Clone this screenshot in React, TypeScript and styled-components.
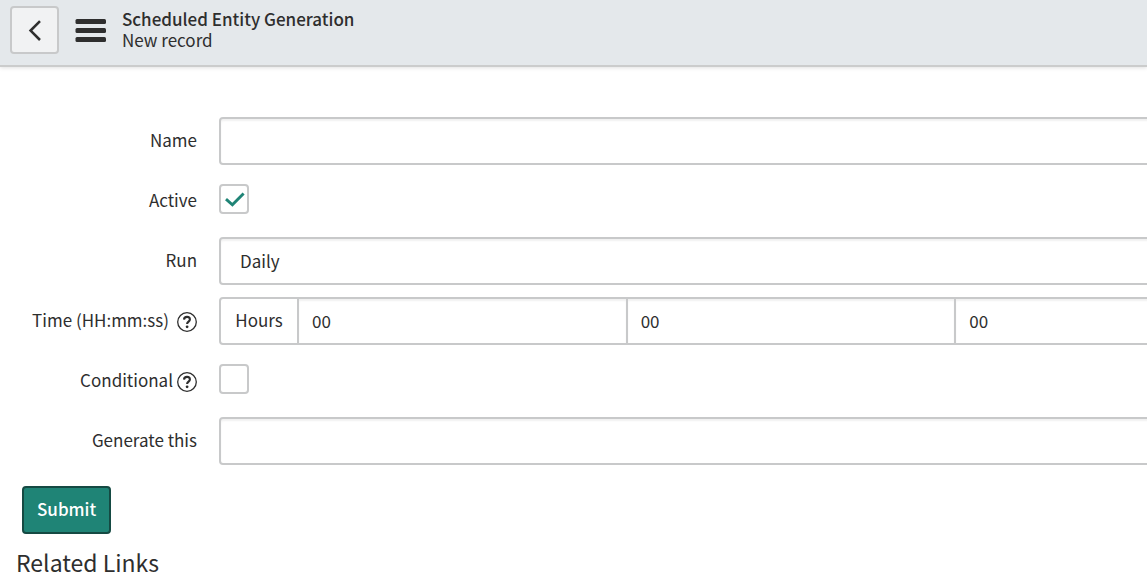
import React from "react";
import styled, { createGlobalStyle } from "styled-components";

const GlobalStyle = createGlobalStyle`
  *, *::before, *::after { box-sizing: border-box; }
  body {
    margin: 0;
    background: #fff;
    color: #2e2e2e;
    font-family: "Noto Sans CJK SC", "Noto Sans", sans-serif;
    font-size: 17px;
    line-height: 24px;
  }
  button, input, select { font: inherit; color: inherit; }
`;

const Page = styled.div`
  overflow: hidden;
`;

const Header = styled.header`
  display: flex;
  align-items: flex-start;
  height: 67px;
  padding: 6px 10px;
  background: #e4e8eb;
  border-bottom: 2px solid #cbcccc;
  box-shadow: 0 1px 4px rgba(0, 0, 0, 0.12);
`;

const BackButton = styled.button`
  display: grid;
  place-items: center;
  width: 49px;
  height: 48px;
  padding: 0;
  background: #f1f2f3;
  border: 2px solid #c8c9ca;
  border-radius: 4px;
`;

const MenuButton = styled.button`
  display: block;
  height: 48px;
  margin: 0 16px;
  padding: 0;
  background: none;
  border: 0;

  svg { display: block; }
`;

const Heading = styled.div`
  padding-top: 2px;
`;

const Title = styled.h1`
  margin: 0;
  font-size: 17px;
  font-weight: 500;
  line-height: 21px;
`;

const Subtitle = styled.div`
  line-height: 21px;
`;

/* The form is wider than the window, so its fields run past the right edge. */
const Form = styled.form`
  width: calc(100% + 138px);
  padding-top: 44px;
`;

const Row = styled.div`
  display: grid;
  grid-template-columns: 197px 1fr;
  column-gap: 22px;
  align-items: center;
  height: 60px;
`;

const LabelCell = styled.div<{ $gap?: number }>`
  display: flex;
  align-items: center;
  justify-content: flex-end;
  gap: ${({ $gap }) => $gap ?? 0}px;
  padding-bottom: 2px;
  white-space: nowrap;
`;

const HelpButton = styled.button`
  width: 20px;
  height: 20px;
  margin-top: 4px;
  padding: 0;
  background: none;
  border: 0;

  svg { display: block; }
`;

const fieldHeight = 48;

const TextInput = styled.input`
  width: 100%;
  height: ${fieldHeight}px;
  padding: 0 19px;
  background: #fff;
  border: 2px solid #c8c9ca;
  border-radius: 4px;
  box-shadow: inset 0 2px 2px rgba(0, 0, 0, 0.06);
`;

const Select = styled.select`
  width: 100%;
  height: ${fieldHeight}px;
  padding: 0 19px;
  appearance: none;
  background: #fff;
  border: 2px solid #c8c9ca;
  border-radius: 4px;
  box-shadow: inset 0 2px 2px rgba(0, 0, 0, 0.06);
`;

const CheckWrap = styled.span`
  display: grid;
  width: 30px;
  height: 30px;
  margin-bottom: 4px;

  > * { grid-area: 1 / 1; }
  svg { pointer-events: none; visibility: hidden; }
  input:checked + svg { visibility: visible; }
`;

const CheckInput = styled.input`
  width: 30px;
  height: 30px;
  margin: 0;
  appearance: none;
  background: #fff;
  border: 2px solid #c8c9ca;
  border-radius: 4px;
`;

const TimeGroup = styled.div`
  display: flex;
  height: ${fieldHeight}px;
  border: 2px solid #c8c9ca;
  border-radius: 4px;
`;

const TimeUnit = styled.span`
  display: flex;
  align-items: center;
  justify-content: center;
  width: 76px;
  padding-bottom: 2px;
`;

const TimeInput = styled.input`
  flex: 1;
  min-width: 0;
  padding: 0 13px;
  background: #fff;
  border: 0;
  border-left: 2px solid #c8c9ca;
  box-shadow: inset 0 2px 2px rgba(0, 0, 0, 0.06);
`;

const SubmitButton = styled.button`
  display: block;
  height: ${fieldHeight}px;
  margin: 15px 22px 0;
  padding: 0 13px 2px;
  background: #1f8476;
  border: 2px solid #154a43;
  border-radius: 4px;
  color: #fff;
  font-weight: 500;
`;

const RelatedLinks = styled.h2`
  margin: 12px 16px 0;
  font-size: 23px;
  font-weight: 400;
  line-height: 32px;
`;

const Help = ({ label }: { label: string }) => (
  <HelpButton type="button" aria-label={label}>
    <svg width="20" height="20" viewBox="0 0 20 20" fill="none" stroke="#2e2e2e">
      <circle cx="10" cy="10" r="9.3" strokeWidth="1.3" />
      <path d="M7 7.6C7.1 5.8 8.3 4.9 10 4.9C11.8 4.9 12.9 5.9 12.9 7.4C12.9 9.5 10.1 9.7 10.1 12" strokeWidth="2.1" />
      <circle cx="10.1" cy="14.8" r="1.4" fill="#2e2e2e" stroke="none" />
    </svg>
  </HelpButton>
);

const CheckBox = ({ id, checked }: { id: string; checked?: boolean }) => (
  <CheckWrap>
    <CheckInput id={id} type="checkbox" defaultChecked={checked} />
    <svg width="30" height="30" viewBox="0 0 30 30" fill="none">
      <path d="M7 15.2L13.4 20.8L24.6 9.4" stroke="#1f8476" strokeWidth="2.9" />
    </svg>
  </CheckWrap>
);

export default function App() {
  return (
    <Page>
      <GlobalStyle />
      <Header>
        <BackButton type="button" aria-label="Back">
          <svg width="20" height="24" viewBox="0 0 20 24" fill="none">
            <path d="M15 3.2L5.6 12.6L15 22" stroke="#2e2e2e" strokeWidth="2.6" />
          </svg>
        </BackButton>
        <MenuButton type="button" aria-label="Menu">
          <svg width="31" height="48" viewBox="0 0 31 48" fill="#2e2e2e">
            <rect x="0.5" y="13" width="30.5" height="5" rx="1.5" />
            <rect x="0.5" y="22" width="30.5" height="5" rx="1.5" />
            <rect x="0.5" y="31" width="30.5" height="5" rx="1.5" />
          </svg>
        </MenuButton>
        <Heading>
          <Title>Scheduled Entity Generation</Title>
          <Subtitle>New record</Subtitle>
        </Heading>
      </Header>
      <Form onSubmit={(e) => e.preventDefault()}>
        <Row>
          <LabelCell><label htmlFor="name">Name</label></LabelCell>
          <TextInput id="name" type="text" />
        </Row>
        <Row>
          <LabelCell><label htmlFor="active">Active</label></LabelCell>
          <CheckBox id="active" checked />
        </Row>
        <Row>
          <LabelCell><label htmlFor="run">Run</label></LabelCell>
          <Select id="run" defaultValue="Daily">
            <option>Daily</option>
          </Select>
        </Row>
        <Row>
          <LabelCell $gap={8}>
            <label htmlFor="hours">Time (HH:mm:ss)</label>
            <Help label="Help for time" />
          </LabelCell>
          <TimeGroup>
            <TimeUnit>Hours</TimeUnit>
            <TimeInput id="hours" type="text" defaultValue="00" />
            <TimeInput aria-label="Minutes" type="text" defaultValue="00" />
            <TimeInput aria-label="Seconds" type="text" defaultValue="00" />
          </TimeGroup>
        </Row>
        <Row>
          <LabelCell $gap={4}>
            <label htmlFor="conditional">Conditional</label>
            <Help label="Help for conditional" />
          </LabelCell>
          <CheckBox id="conditional" />
        </Row>
        <Row>
          <LabelCell><label htmlFor="generate">Generate this</label></LabelCell>
          <TextInput id="generate" type="text" />
        </Row>
        <SubmitButton type="submit">Submit</SubmitButton>
      </Form>
      <RelatedLinks>Related Links</RelatedLinks>
    </Page>
  );
}
